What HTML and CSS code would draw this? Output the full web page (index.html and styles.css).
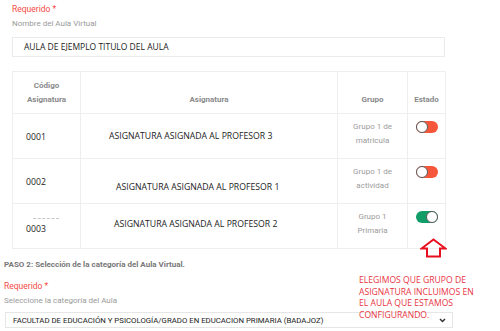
FILE: index.html
```html
<!DOCTYPE html>
<html lang="es">
<head>
    <meta charset="UTF-8">
    <title>Aula Virtual</title>
    <link rel="stylesheet" href="styles.css">
</head>
<body>
    <section class="step">
        <div class="req">Requerido *</div>
        <div class="hint">Nombre del Aula Virtual</div>
        <div class="field">AULA DE EJEMPLO TITULO DEL AULA</div>

        <table class="grid">
            <colgroup>
                <col class="w-code"><col class="w-name"><col class="w-group"><col class="w-state">
            </colgroup>
            <thead>
                <tr>
                    <th>Código<br>Asignatura</th>
                    <th>Asignatura</th>
                    <th>Grupo</th>
                    <th>Estado</th>
                </tr>
            </thead>
            <tbody>
                <tr>
                    <td class="code">0001</td>
                    <td class="name pad-a">ASIGNATURA ASIGNADA AL PROFESOR 3</td>
                    <td class="group">Grupo 1 de<br>matricula</td>
                    <td class="state"><span class="switch"><span class="knob"></span></span></td>
                </tr>
                <tr>
                    <td class="code">0002</td>
                    <td class="name pad-b">ASIGNATURA ASIGNADA AL PROFESOR 1</td>
                    <td class="group">Grupo 1 de<br>actividad</td>
                    <td class="state"><span class="switch"><span class="knob"></span></span></td>
                </tr>
                <tr>
                    <td class="code"><span class="smudge"></span>0003</td>
                    <td class="name pad-c">ASIGNATURA ASIGNADA AL PROFESOR 2</td>
                    <td class="group">Grupo 1<br>Primaria</td>
                    <td class="state"><span class="switch on"><span class="knob"></span></span></td>
                </tr>
            </tbody>
        </table>
    </section>

    <section class="step2">
        <div class="title">PASO 2: Selección de la categoría del Aula Virtual.</div>
        <div class="req second">Requerido *</div>
        <div class="hint">Seleccione la categoría del Aula</div>
        <div class="select">
            <span>FACULTAD DE EDUCACIÓN Y PSICOLOGÍA/GRADO EN EDUCACION PRIMARIA (BADAJOZ)</span>
            <svg class="chev" width="7" height="5" viewBox="0 0 7 5"><path d="M1 1 L3.5 3.5 L6 1" fill="none" stroke="#333" stroke-width="1.5"/></svg>
        </div>
    </section>

    <!-- annotations drawn over the screenshot -->
    <svg class="arrow" width="27" height="20" viewBox="0 0 27 20">
        <polygon points="13.5,1.5 25.5,10.5 20,10.5 20,18.5 7,18.5 7,10.5 1.5,10.5" fill="none" stroke="#e8101e" stroke-width="2" stroke-linejoin="miter"/>
    </svg>
    <div class="note">ELEGIMOS QUE GRUPO DE<br>ASIGNATURA INCLUIMOS EN<br>EL AULA QUE ESTAMOS<br>CONFIGURANDO.</div>
</body>
</html>
```

FILE: styles.css
```css
body {
    margin: 0;
    width: 500px;
    height: 331px;
    overflow: hidden;
    position: relative;
    font-family: Roboto, "Liberation Sans", sans-serif;
    background-color: #fff;
}

.step {
    padding: 3px 55px 0 12px;
}

.req {
    color: #f44a45;
    font-size: 8.5px;
    line-height: 12px;
}

.hint {
    margin-top: 3px;
    color: #9a9a9a;
    font-size: 8px;
    line-height: 12px;
}

.field {
    margin-top: 7px;
    height: 20px;
    box-sizing: border-box;
    border: 1px solid #ebebeb;
    padding-left: 11px;
    font-family: "Open Sans", sans-serif;
    font-size: 8.5px;
    line-height: 18px;
    color: #222;
}

.grid {
    margin-top: 14px;
    width: 433px;
    border-collapse: collapse;
    table-layout: fixed;
}

.w-code { width: 68px; }
.w-name { width: 257px; }
.w-group { width: 70px; }
.w-state { width: 38px; }

.grid th,
.grid td {
    border: 1px solid #eeeeee;
}

.grid th {
    padding: 7px 2px 6px;
    vertical-align: bottom;
    text-align: center;
    font-size: 8px;
    font-weight: bold;
    line-height: 14px;
    color: #8a8a8a;
}

.grid td {
    vertical-align: middle;
    font-family: "Open Sans", sans-serif;
    font-size: 8.7px;
    line-height: 14px;
    color: #222;
}

.code {
    padding: 2px 0 0 13px;
}

.smudge {
    display: block;
    width: 26px;
    margin: 0 0 3px 7px;
    border-top: 1px dashed #c8c8c8;
}

.name {
    padding: 4px 0 4px 28px;
    white-space: nowrap;
}

.name.pad-b { padding: 16px 0 4px 35px; }
.name.pad-c { padding: 2px 0 6px 33px; }

.grid td.group {
    vertical-align: top;
    padding: 6px 2px 10px;
    text-align: center;
    font-family: Roboto, sans-serif;
    font-size: 8px;
    color: #9c9c9c;
}

.grid td.state {
    vertical-align: top;
    padding-top: 7px;
    text-align: center;
}

.switch {
    display: inline-flex;
    justify-content: flex-start;
    width: 22px;
    height: 12px;
    border-radius: 6px;
    background-color: #f6573a;
    vertical-align: top;
}

.switch.on {
    justify-content: flex-end;
    background-color: #129c68;
}

.knob {
    width: 12px;
    height: 12px;
    box-sizing: border-box;
    border-radius: 50%;
    border: 1px solid #5a5a5a;
    background-color: #fff;
}

.step2 {
    padding: 0 47px 0 4px;
}

.title {
    margin-top: 10px;
    font-size: 8px;
    font-weight: bold;
    line-height: 12px;
    color: #777;
}

.req.second {
    margin-top: 9px;
}

.select {
    margin: 5px 0 0 1px;
    height: 16px;
    box-sizing: border-box;
    border: 1px solid #e6e6e6;
    padding: 0 6px 0 7px;
    display: flex;
    align-items: center;
    justify-content: space-between;
    font-size: 7.8px;
    color: #222;
}

.chev {
    display: block;
}

.arrow {
    position: absolute;
    left: 420px;
    top: 238px;
}

.note {
    position: absolute;
    left: 359px;
    top: 275px;
    font-family: "Open Sans", sans-serif;
    font-size: 8.6px;
    line-height: 11.7px;
    color: #e8343f;
}
```
